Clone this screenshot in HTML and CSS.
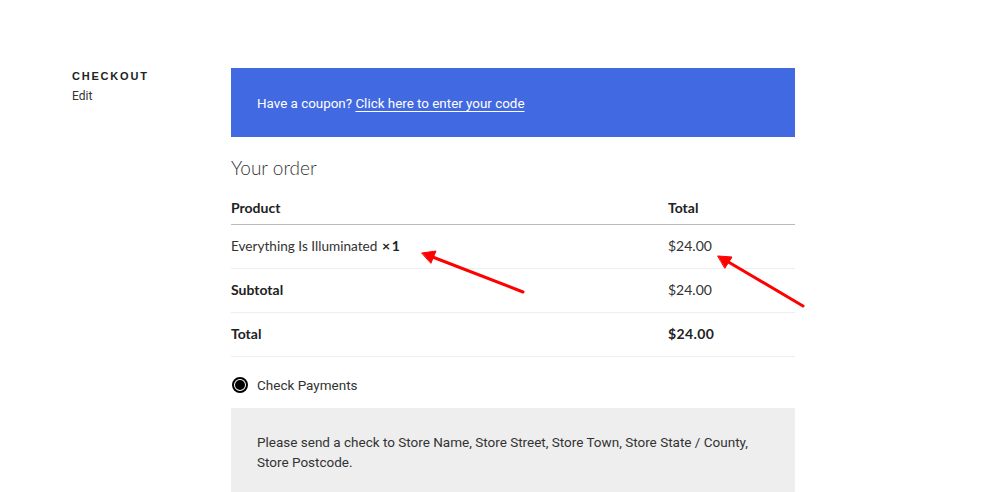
FILE: index.html
```html
<!DOCTYPE html>
<html>
<head>
<meta charset="utf-8">
<link rel="stylesheet" href="styles.css">
</head>
<body>
<div class="page">
  <aside class="side">
    <h2 class="side-title">Checkout</h2>
    <a class="side-edit">Edit</a>
  </aside>
  <main class="main">
    <div class="coupon">Have a coupon? <a class="coupon-link">Click here to enter your code</a></div>
    <h3 class="order-title">Your order</h3>
    <table class="order">
      <thead>
        <tr><th class="c1">Product</th><th class="c2">Total</th></tr>
      </thead>
      <tbody>
        <tr><td class="c1"><span class="pname">Everything Is Illuminated</span> <strong class="qty">×&#8201;1</strong></td><td class="c2">$24.00</td></tr>
      </tbody>
      <tfoot>
        <tr><th class="c1">Subtotal</th><td class="c2">$24.00</td></tr>
        <tr><th class="c1">Total</th><td class="c2"><strong class="grand">$24.00</strong></td></tr>
      </tfoot>
    </table>
    <div class="method">
      <span class="radio"><span class="dot"></span></span>
      <span class="method-label">Check Payments</span>
    </div>
    <div class="pay-box">Please send a check to Store Name, Store Street, Store Town, Store State / County, Store Postcode.</div>
  </main>
</div>
<svg class="arrows" width="1001" height="492" viewBox="0 0 1001 492">
  <g stroke="#ff0000" stroke-width="3" stroke-linecap="round" fill="#ff0000">
    <line x1="523" y1="292" x2="430" y2="256"/>
    <polygon points="422,253 436,251 431,263" stroke-width="1"/>
    <line x1="803" y1="306" x2="725" y2="260"/>
    <polygon points="718,256 732,257 725,268" stroke-width="1"/>
  </g>
</svg>
</body>
</html>
```
FILE: styles.css
```css
html, body {
  margin: 0;
  padding: 0;
  background: #fff;
}
body {
  font-family: "Lato", "Liberation Sans", sans-serif;
  color: #333;
  width: 1001px;
  height: 492px;
  overflow: hidden;
  position: relative;
}
.page {
  display: flex;
  padding-top: 68px;
  padding-left: 72px;
}
.side {
  width: 159px;
  flex: none;
}
.side-title {
  margin: 1px 0 0;
  font-family: "Liberation Sans", sans-serif;
  font-size: 11px;
  font-weight: 800;
  letter-spacing: 1.8px;
  text-transform: uppercase;
  color: #222;
  line-height: 14px;
}
.side-edit {
  display: block;
  margin-top: 6px;
  font-family: "Roboto", "Liberation Sans", sans-serif;
  font-size: 12px;
  color: #333;
  line-height: 14px;
}
.main {
  width: 564px;
  flex: none;
}
.coupon {
  background: #4169e1;
  color: #fff;
  height: 69px;
  box-sizing: border-box;
  padding: 27px 26px 0;
  font-family: "Roboto", "Liberation Sans", sans-serif;
  font-size: 13.4px;
  line-height: 18px;
}
.coupon-link {
  color: #fff;
  text-decoration: underline;
  text-underline-offset: 3px;
  text-decoration-thickness: 1px;
}
.order-title {
  margin: 19px 0 0;
  font-weight: 300;
  font-size: 19px;
  line-height: 24px;
  color: #333;
}
.order {
  width: 100%;
  border-collapse: collapse;
  margin-top: 10px;
  font-size: 14px;
}
.order th, .order td {
  text-align: left;
  padding: 0;
  height: 43px;
  vertical-align: middle;
  border-bottom: 1px solid #eee;
  line-height: 20px;
}
.order th { font-weight: 700; color: #222; }
.order thead th {
  height: 34px;
  vertical-align: top;
  padding-top: 8px;
  box-sizing: border-box;
  border-bottom: 1px solid #bbb;
}
.order td { color: #333; }
.order td strong { color: #222; }
.c1 { width: 437px; }
.pname { font-size: 13.6px; }
.qty { font-weight: 700; margin-left: 1px; }
.grand { letter-spacing: 0.4px; }
.method {
  display: flex;
  align-items: center;
  height: 56px;
  padding-left: 1px;
}
.radio {
  width: 16px;
  height: 16px;
  box-sizing: border-box;
  border: 2px solid #000;
  border-radius: 50%;
  display: flex;
  align-items: center;
  justify-content: center;
}
.dot {
  width: 10px;
  height: 10px;
  border-radius: 50%;
  background: #000;
}
.method-label {
  margin-left: 9px;
  font-family: "Roboto", "Liberation Sans", sans-serif;
  font-size: 13.5px;
  color: #333;
}
.pay-box {
  margin-top: -5px;
  background: #eee;
  padding: 24px 26px 24px;
  font-family: "Roboto", "Liberation Sans", sans-serif;
  font-size: 13.5px;
  line-height: 20px;
  color: #333;
}
.arrows {
  position: absolute;
  left: 0;
  top: 0;
  pointer-events: none;
}
```
